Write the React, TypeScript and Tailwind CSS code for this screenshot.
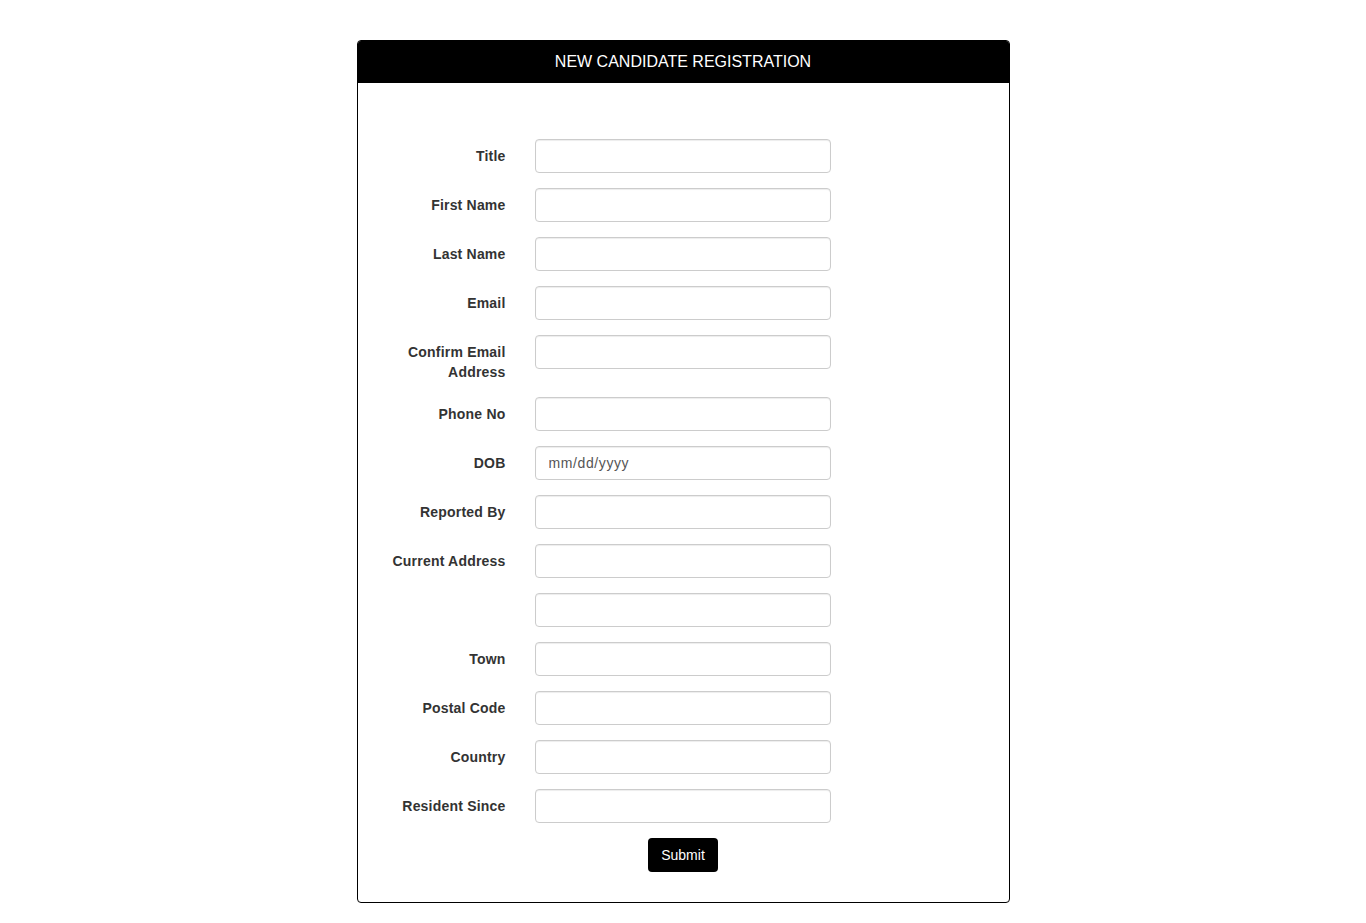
import React from "react";

const rows: { label: string; placeholder?: string }[] = [
  { label: "Title" },
  { label: "First Name" },
  { label: "Last Name" },
  { label: "Email" },
  { label: "Confirm Email Address" },
  { label: "Phone No" },
  { label: "DOB", placeholder: "mm/dd/yyyy" },
  { label: "Reported By" },
  { label: "Current Address" },
  { label: "" },
  { label: "Town" },
  { label: "Postal Code" },
  { label: "Country" },
  { label: "Resident Since" },
];

export default function App() {
  return (
    <div className="min-h-[923px] bg-white pt-[40px] font-['Liberation_Sans',Arial,sans-serif] text-[14px] leading-[20px] text-[#333]">
      <div className="mx-auto w-[653px] rounded-[4px] border border-black">
        <div className="flex h-[42px] items-center justify-center rounded-t-[3px] bg-black text-[16px] text-white">
          NEW CANDIDATE REGISTRATION
        </div>
        <form className="flex flex-col gap-[15px] pb-[30px] pt-[56px]">
          {rows.map((r, i) => (
            <div key={i} className="flex items-start">
              <label className="w-[148px] pl-[15px] pt-[7px] text-right font-bold tracking-[0.2px]">
                <span className="inline-block w-[122px]">{r.label}</span>
              </label>
              <div className="ml-[29px]">
                <input
                  type="text"
                  placeholder={r.placeholder}
                  className="block h-[34px] w-[296px] rounded-[4px] border border-[#ccc] bg-white px-[13px] text-[14px] tracking-[0.6px] text-[#555] shadow-[inset_0_1px_1px_rgba(0,0,0,0.075)] outline-none placeholder:text-[#555]"
                />
              </div>
            </div>
          ))}
          <div className="flex justify-center">
            <button
              type="button"
              className="h-[34px] w-[70px] rounded-[4px] bg-black text-[14px] text-white"
            >
              Submit
            </button>
          </div>
        </form>
      </div>
    </div>
  );
}
